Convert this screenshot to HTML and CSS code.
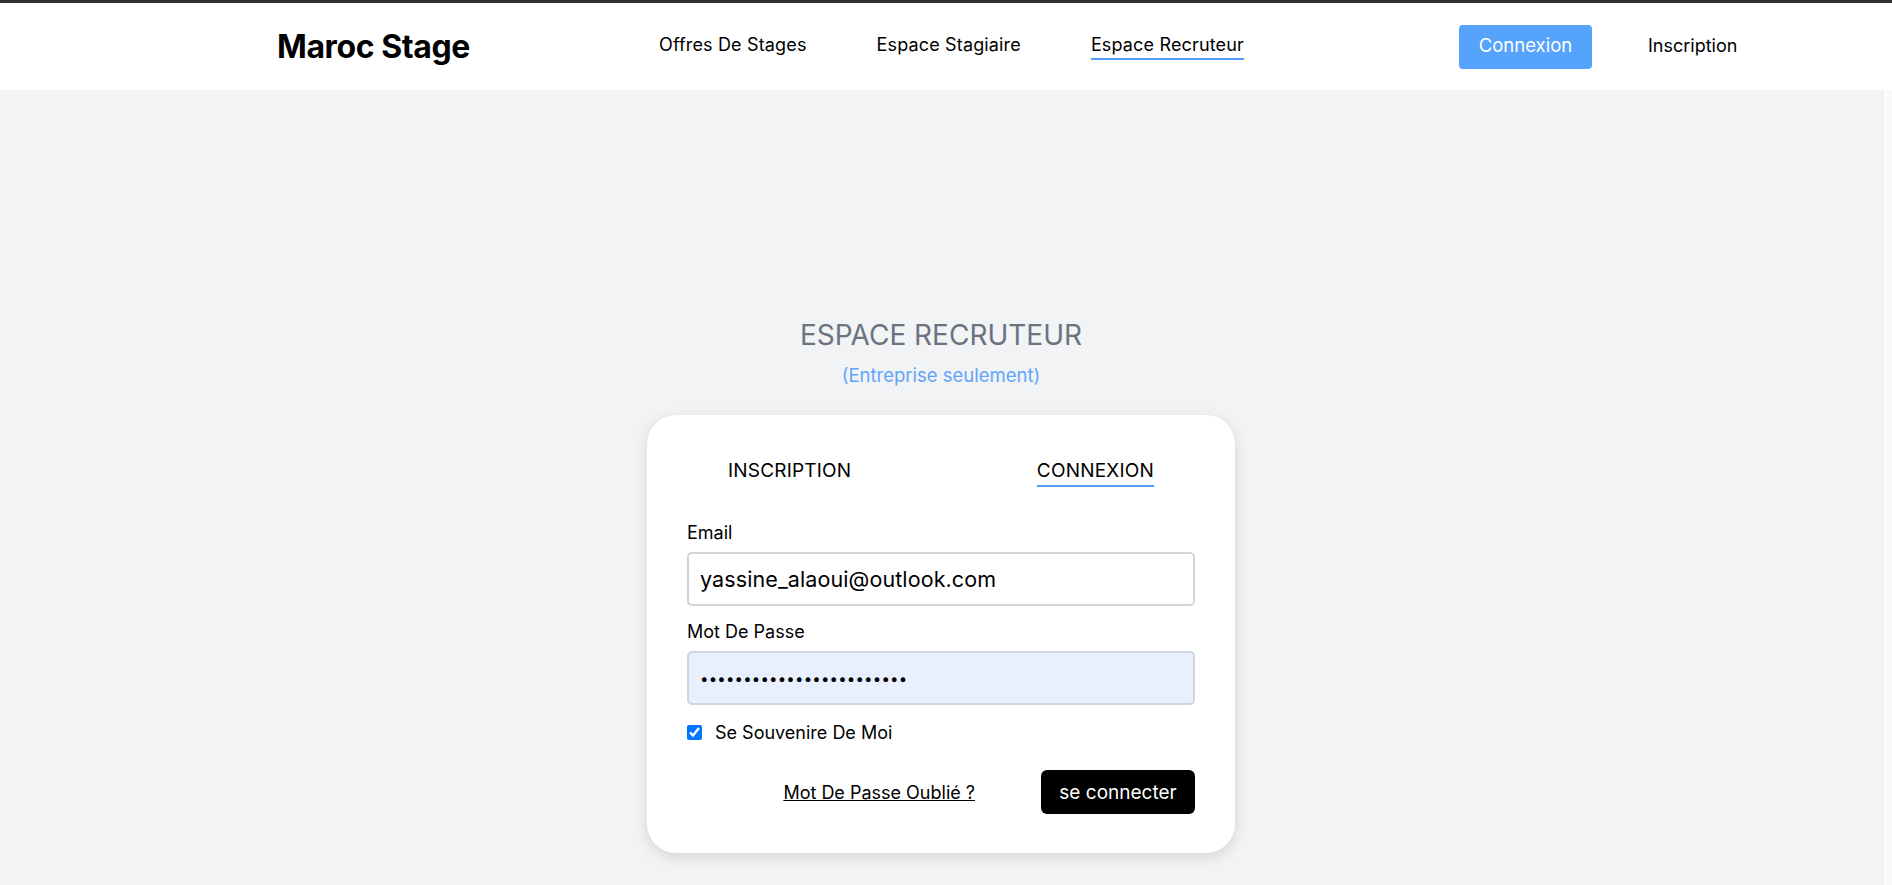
FILE: index.html
```html
<!DOCTYPE html>
<html lang="fr">
<head>
<meta charset="utf-8">
<title>Maroc Stage</title>
<link rel="stylesheet" href="styles.css">
</head>
<body>
<div class="topline"></div>
<header class="header">
  <div class="logo-box"><span class="logo">Maroc Stage</span></div>
  <nav class="nav">
    <a class="nav-link" href="#">Offres De Stages</a>
    <a class="nav-link" href="#">Espace Stagiaire</a>
    <a class="nav-link active" href="#">Espace Recruteur</a>
  </nav>
  <a class="btn-connexion" href="#">Connexion</a>
  <a class="link-inscription" href="#">Inscription</a>
</header>
<div class="body-row">
  <main class="main">
    <h1 class="title">ESPACE RECRUTEUR</h1>
    <p class="subtitle">(Entreprise seulement)</p>
    <section class="card">
      <div class="tabs">
        <span class="tab">INSCRIPTION</span>
        <span class="tab active">CONNEXION</span>
      </div>
      <form class="form">
        <label class="label" for="email">Email</label>
        <input class="input" id="email" type="text" value="yassine_alaoui@outlook.com">
        <label class="label label-2" for="pass">Mot De Passe</label>
        <input class="input input-filled" id="pass" type="password" value="xxxxxxxxxxxxxxxxxxxxxxxx">
        <div class="remember">
          <input class="check" type="checkbox" id="rem" checked>
          <label for="rem" class="remember-label">Se Souvenire De Moi</label>
        </div>
        <div class="actions">
          <a class="forgot" href="#">Mot De Passe Oublié ?</a>
          <button class="btn-submit" type="button">se connecter</button>
        </div>
      </form>
    </section>
  </main>
  <div class="scroll-strip"></div>
</div>
</body>
</html>
```
FILE: styles.css
```css
* { box-sizing: border-box; }
html, body { margin: 0; padding: 0; }
body {
  background: #f2f3f5;
  font-family: "Inter", "Noto Sans", sans-serif;
  color: #000;
  height: 885px;
  overflow: hidden;
  display: flex;
  flex-direction: column;
}
.topline { height: 3px; background: #333; flex: none; }
.header {
  flex: none;
  height: 87px;
  background: #fff;
  display: flex;
  align-items: center;
  padding-left: 277px;
}
.logo-box { width: 382px; }
.logo { font-size: 32px; font-weight: 700; letter-spacing: -0.4px; }
.nav { width: 800px; display: flex; gap: 70px; align-items: center; }
.nav-link {
  color: #000;
  text-decoration: none;
  font-size: 18px;
  line-height: 22px;
  letter-spacing: 0.15px;
  padding: 0 0 2px;
  border-bottom: 2px solid transparent;
}
.nav-link.active { border-bottom-color: #4f9ff5; }
.btn-connexion {
  width: 133px;
  height: 44px;
  background: #55a3fb;
  color: #fff;
  border-radius: 4px;
  text-decoration: none;
  font-size: 18.5px;
  display: flex;
  align-items: center;
  justify-content: center;
  padding-bottom: 3px;
}
.link-inscription {
  margin-left: 56px;
  color: #000;
  text-decoration: none;
  font-size: 18px;
  padding-bottom: 2px;
}
.body-row { flex: 1; display: flex; }
.main {
  flex: 1;
  display: flex;
  flex-direction: column;
  align-items: center;
  padding-top: 227px;
}
.scroll-strip {
  width: 10px;
  background: #fafafa;
  border-left: 1px solid #ececec;
}
.title {
  margin: 0;
  font-size: 28px;
  line-height: 36px;
  font-weight: 400;
  color: #6b7280;
}
.subtitle {
  margin: 10px 0 0;
  font-size: 18.5px;
  line-height: 24px;
  color: #60a5fa;
}
.card {
  margin-top: 28px;
  width: 588px;
  background: #fff;
  border-radius: 29px;
  box-shadow: 0 4px 14px rgba(0, 0, 0, 0.13);
  padding: 44px 40px 39px;
}
.tabs {
  display: flex;
  justify-content: space-between;
  padding: 0 41px;
}
.tab {
  font-size: 19px;
  line-height: 24px;
  letter-spacing: 0.2px;
  padding-bottom: 2px;
  border-bottom: 2px solid transparent;
}
.tab.active { border-bottom-color: #4f9ff5; }
.form { display: flex; flex-direction: column; margin-top: 34px; }
.label { font-size: 18px; line-height: 24px; margin-bottom: 7px; }
.label-2 { margin-top: 14px; }
.input {
  height: 54px;
  width: 100%;
  border: 2px solid #d1d5db;
  border-radius: 5px;
  padding: 0 11px;
  font-family: inherit;
  font-size: 21.5px;
  letter-spacing: 0.1px;
  color: #000;
  background: #fff;
  outline: none;
}
.input-filled {
  background: #e8f0fe;
  border-color: #cfd6df;
  font-size: 15px;
  letter-spacing: 0.2px;
}
.remember {
  margin-top: 15px;
  display: flex;
  align-items: center;
  height: 24px;
}
.check { margin: 0; width: 15px; height: 15px; }
.remember-label { margin-left: 13px; font-size: 18px; }
.actions {
  margin-top: 26px;
  display: flex;
  justify-content: flex-end;
  align-items: center;
  gap: 66px;
}
.forgot { color: #000; font-size: 18px; text-decoration: underline; }
.btn-submit {
  width: 154px;
  height: 44px;
  background: #000;
  color: #fff;
  border: none;
  border-radius: 6px;
  font-family: inherit;
  font-size: 19px;
}
```
